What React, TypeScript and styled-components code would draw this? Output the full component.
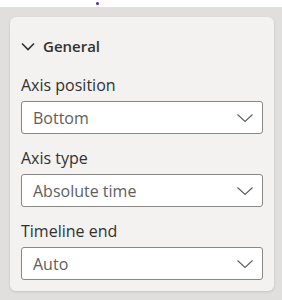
import React from "react";
import styled, { createGlobalStyle } from "styled-components";

const Global = createGlobalStyle`
  html, body { margin: 0; padding: 0; background: #e1dfdd; }
  body { font-family: "Open Sans", "Noto Sans", sans-serif; color: #323130; }
  * { box-sizing: border-box; }
`;

const Page = styled.div`
  width: 282px;
  height: 300px;
  display: flex;
  flex-direction: column;
  background: #e1dfdd;
`;

const TopStrip = styled.div`
  height: 7px;
  background: #ffffff;
  position: relative;
  flex-shrink: 0;
`;

const Dot = styled.span`
  position: absolute;
  left: 96px;
  top: 2px;
  width: 3px;
  height: 3px;
  border-radius: 50%;
  background: #4a22d8;
`;

const Area = styled.div`
  padding: 10px 8px 9px 10px;
  flex: 1;
  display: flex;
`;

const Card = styled.div`
  flex: 1;
  background: #f3f2f1;
  border-radius: 6px;
  box-shadow: 0 1px 3px rgba(0, 0, 0, 0.12);
  padding: 19px 11px 11px 11px;
  display: flex;
  flex-direction: column;
`;

const Header = styled.div`
  display: flex;
  align-items: center;
  gap: 8px;
  height: 20px;
  font-size: 15px;
  font-weight: 600;
  color: #323130;
  margin-bottom: 19px;
`;

const Group = styled.div`
  display: flex;
  flex-direction: column;
  & + & {
    margin-top: 14px;
  }
`;

const Label = styled.div`
  height: 20px;
  line-height: 20px;
  font-size: 16px;
  color: #323130;
  margin-bottom: 6px;
`;

const Select = styled.div`
  height: 33px;
  background: #ffffff;
  border: 1px solid #8a8886;
  border-radius: 3px;
  display: flex;
  align-items: center;
  justify-content: space-between;
  padding: 0 8px 0 11px;
  font-size: 16px;
  color: #605e5c;
`;

const HeaderChevron = () => (
  <svg width="14" height="9" viewBox="0 0 14 9" fill="none">
    <path d="M1 1.5 L7 7.5 L13 1.5" stroke="#323130" strokeWidth="1.6" />
  </svg>
);

const SelectChevron = () => (
  <svg width="18" height="10" viewBox="0 0 18 10" fill="none">
    <path d="M1.5 1.5 L9 8.5 L16.5 1.5" stroke="#605e5c" strokeWidth="1.1" />
  </svg>
);

const fields = [
  { label: "Axis position", value: "Bottom" },
  { label: "Axis type", value: "Absolute time" },
  { label: "Timeline end", value: "Auto" },
];

export default function App() {
  return (
    <Page>
      <Global />
      <TopStrip>
        <Dot />
      </TopStrip>
      <Area>
        <Card>
          <Header>
            <HeaderChevron />
            <span>General</span>
          </Header>
          {fields.map((f) => (
            <Group key={f.label}>
              <Label>{f.label}</Label>
              <Select>
                <span>{f.value}</span>
                <SelectChevron />
              </Select>
            </Group>
          ))}
        </Card>
      </Area>
    </Page>
  );
}
